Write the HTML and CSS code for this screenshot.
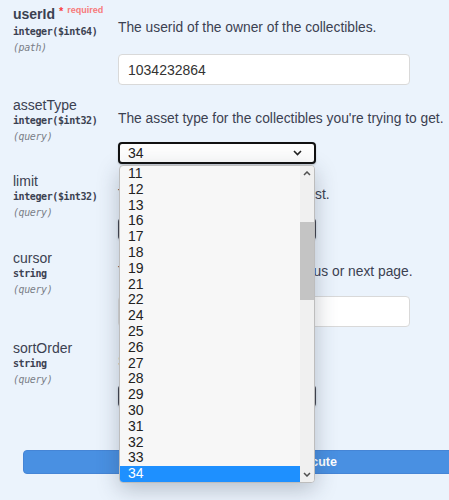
FILE: index.html
```html
<!DOCTYPE html>
<html>
<head>
<meta charset="utf-8">
<link rel="stylesheet" href="styles.css">
</head>
<body>

  <div class="params">

    <div class="param param-input-first">
      <div class="param-name-col">
        <div class="param-name required">userId<span class="star">*</span><span class="req">required</span></div>
        <div class="param-type">integer($int64)</div>
        <div class="param-in">(path)</div>
      </div>
      <div class="param-body">
        <p class="desc">The userid of the owner of the collectibles.</p>
        <input class="text-input" type="text" value="1034232864">
      </div>
    </div>

    <div class="param param-select-mid">
      <div class="param-name-col">
        <div class="param-name">assetType</div>
        <div class="param-type">integer($int32)</div>
        <div class="param-in">(query)</div>
      </div>
      <div class="param-body">
        <p class="desc">The asset type for the collectibles you're trying to get.</p>
        <div class="select focused">
          <span>34</span>
          <svg class="chev" width="9" height="6" viewBox="0 0 9 6"><polyline points="1,1 4.5,4.5 8,1" fill="none" stroke="#222" stroke-width="1.6"/></svg>
        </div>
      </div>
    </div>

    <div class="param param-select-last">
      <div class="param-name-col">
        <div class="param-name">limit</div>
        <div class="param-type">integer($int32)</div>
        <div class="param-in">(query)</div>
      </div>
      <div class="param-body">
        <p class="desc">The number of results per request.</p>
        <div class="select">
          <span>10</span>
        </div>
      </div>
    </div>

    <div class="param param-input">
      <div class="param-name-col">
        <div class="param-name">cursor</div>
        <div class="param-type">string</div>
        <div class="param-in">(query)</div>
      </div>
      <div class="param-body">
        <p class="desc">The paging cursor for the previous or next page.</p>
        <input class="text-input input-cursor" type="text" value="">
      </div>
    </div>

    <div class="param param-end">
      <div class="param-name-col">
        <div class="param-name">sortOrder</div>
        <div class="param-type">string</div>
        <div class="param-in">(query)</div>
      </div>
      <div class="param-body">
        <p class="desc">Sorted by userAssetId</p>
        <div class="select">
          <span>Asc</span>
        </div>
      </div>
    </div>

  </div>

  <button class="execute">Execute</button>

  <!-- open option list of the assetType select -->
  <div class="dropdown">
    <ul class="options">
      <li>11</li>
      <li>12</li>
      <li>13</li>
      <li>16</li>
      <li>17</li>
      <li>18</li>
      <li>19</li>
      <li>21</li>
      <li>22</li>
      <li>24</li>
      <li>25</li>
      <li>26</li>
      <li>27</li>
      <li>28</li>
      <li>29</li>
      <li>30</li>
      <li>31</li>
      <li>32</li>
      <li>33</li>
      <li class="selected">34</li>
    </ul>
    <div class="scrollbar">
      <svg class="arrow-up" width="8" height="5" viewBox="0 0 8 5"><polyline points="1,4 4,1 7,4" fill="none" stroke="#505050" stroke-width="1.5"/></svg>
      <div class="thumb"></div>
      <svg class="arrow-down" width="8" height="5" viewBox="0 0 8 5"><polyline points="1,1 4,4 7,1" fill="none" stroke="#505050" stroke-width="1.5"/></svg>
    </div>
  </div>

</body>
</html>
```

FILE: styles.css
```css
html, body
{
  margin: 0;
  padding: 0;
}

body
{
  width: 449px;
  height: 500px;
  overflow: hidden;
  position: relative;
  background-color: #ebf3fc;
  color: #3b4151;
  font-family: "Liberation Sans", Arial, sans-serif;
  font-size: 14px;
}

.params
{
  padding-top: 6px;
}

.param
{
  display: grid;
  grid-template-columns: 118px 1fr;
}

.param-input-first { padding-bottom: 12px; }
.param-select-mid  { padding-bottom: 9px; }
.param-select-last { padding-bottom: 10px; }
.param-input       { padding-bottom: 13px; }

.param-name-col
{
  padding-left: 13px;
}

.param-name
{
  font-size: 14px;
  line-height: 16px;
  white-space: nowrap;
}

.param-name.required
{
  font-weight: bold;
}

.star
{
  color: #f93e3e;
  font-size: 11px;
  margin-left: 4px;
  position: relative;
  top: -4px;
}

.req
{
  color: #f77a7a;
  font-size: 9px;
  font-weight: bold;
  margin-left: 4px;
  position: relative;
  top: -6px;
}

.param-type
{
  font-family: "DejaVu Sans Mono", monospace;
  font-weight: bold;
  font-size: 10px;
  letter-spacing: -0.4px;
  line-height: 16px;
  color: #3b4151;
}

.param-in
{
  font-family: "DejaVu Sans Mono", monospace;
  font-style: italic;
  font-size: 10px;
  letter-spacing: -0.4px;
  line-height: 16px;
  color: #7a7e87;
}

.param-body
{
  padding-top: 14px;
}

.desc
{
  margin: 0;
  font-size: 13.8px;
  line-height: 16px;
  white-space: nowrap;
}

.text-input
{
  display: block;
  box-sizing: border-box;
  width: 292px;
  height: 31px;
  margin: 18px 0 0 0;
  padding: 0 9px;
  border: 1px solid #d9d9d9;
  border-radius: 4px;
  background: #fff;
  color: #333;
  font-family: "Liberation Sans", Arial, sans-serif;
  font-size: 14px;
  outline: none;
}

.input-cursor
{
  margin-top: 16px;
}

.select
{
  box-sizing: border-box;
  width: 198px;
  height: 22px;
  margin-top: 15px;
  padding: 0 12px 0 8px;
  border: 2px solid #41444e;
  border-radius: 4px;
  background: #f7f7f7;
  display: flex;
  align-items: center;
  justify-content: space-between;
  color: #222;
  font-size: 14px;
  box-shadow: 0 1px 2px rgba(0,0,0,0.2);
}

.select.focused
{
  border-color: #111;
  background: #fdfdfd;
}

.execute
{
  display: block;
  margin: 43px 0 0 23px;
  width: 580px;
  height: 24px;
  padding: 0;
  border: 1px solid #4585d6;
  border-radius: 4px;
  background: #4990e2;
  color: #fff;
  font-family: "Liberation Sans", Arial, sans-serif;
  font-size: 12.5px;
  font-weight: bold;
}

/* the open list floats over the form */
.dropdown
{
  position: absolute;
  left: 119px;
  top: 165px;
  width: 196px;
  height: 318px;
  box-sizing: border-box;
  border: 1px solid #bdbdbd;
  border-radius: 4px;
  background: #f7f7f7;
  box-shadow: 0 6px 22px rgba(40,50,70,0.28);
  overflow: hidden;
}

.options
{
  list-style: none;
  margin: 0;
  padding: 0;
  width: 180px;
}

.options li
{
  height: 15.8px;
  line-height: 15.8px;
  padding-left: 8px;
  color: #222;
  font-size: 14px;
}

.options li.selected
{
  background: #1e90ff;
  color: #fff;
}

.scrollbar
{
  position: absolute;
  top: 0;
  right: 0;
  width: 14px;
  height: 100%;
  background: #f0f0f0;
}

.thumb
{
  position: absolute;
  left: 0;
  top: 56px;
  width: 14px;
  height: 78px;
  background: #c4c4c4;
}

.arrow-up
{
  position: absolute;
  left: 3px;
  top: 5px;
}

.arrow-down
{
  position: absolute;
  left: 3px;
  bottom: 5px;
}
```
